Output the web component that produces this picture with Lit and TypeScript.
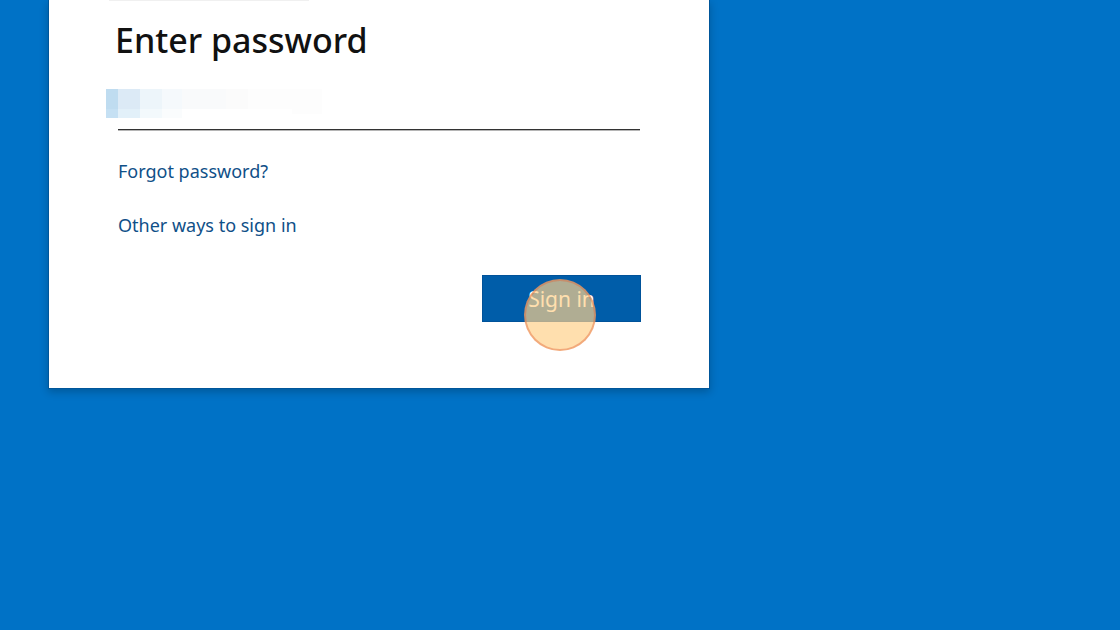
import { LitElement, html, css } from "lit";
import { customElement, state } from "lit/decorators.js";

@customElement("app-root")
export class AppRoot extends LitElement {
  static styles = css`
    :host {
      display: block;
      min-height: 100vh;
      box-sizing: border-box;
      padding: 0 48px;
      background: #0072c6;
      font-family: "Segoe UI", "Noto Sans", sans-serif;
      overflow: hidden;
    }
    *, *::before, *::after { box-sizing: border-box; }
    .card {
      position: relative;
      width: 100%;
      max-width: 662px;
      padding: 16px 69px 66px;
      background: #fff;
      border: 1px solid #00569a;
      border-top: 0;
      box-shadow: 0 3px 8px rgba(0, 0, 0, 0.22);
    }
    .top-trace {
      position: absolute;
      top: 0;
      left: 60px;
      width: 200px;
      height: 1px;
      background: #f0f0f0;
    }
    h1 {
      margin: 0 -3px;
      font-size: 34px;
      line-height: 48px;
      font-weight: 500;
      color: #111;
    }
    .field { position: relative; margin-top: 16px; }
    .field input {
      display: block;
      width: 100%;
      height: 50px;
      padding: 0 4px;
      border: 0;
      border-bottom: 1px solid #333;
      box-shadow: 0 1px 0 #b5b5b5;
      border-radius: 0;
      outline: 0;
      background: transparent;
      font: inherit;
      font-size: 20px;
    }
    .mosaic {
      position: absolute;
      top: 9px;
      left: -12px;
      display: block;
      pointer-events: none;
    }
    .links {
      display: flex;
      flex-direction: column;
      align-items: flex-start;
      gap: 26px;
      margin-top: 27px;
    }
    .links a {
      font-size: 18px;
      line-height: 28px;
      color: #0f5088;
      text-decoration: none;
    }
    .actions {
      display: flex;
      justify-content: flex-end;
      margin: 36px -1px 0 0;
    }
    .submit { position: relative; }
    button {
      display: block;
      width: 159px;
      height: 47px;
      padding: 0;
      border: 1px solid #00529a;
      background: #005da9;
      color: #fff;
      font: inherit;
      font-size: 21px;
      line-height: 28px;
    }
    .click {
      position: absolute;
      left: 42px;
      top: 4px;
      width: 72px;
      height: 72px;
      border: 2px solid rgba(226, 104, 60, 0.45);
      border-radius: 50%;
      background: rgba(255, 209, 138, 0.69);
      pointer-events: none;
    }
  `;

  @state() private password = "";

  private submit(e: Event) {
    e.preventDefault();
  }

  render() {
    return html`
      <form class="card" @submit=${this.submit}>
        <span class="top-trace"></span>
        <h1>Enter password</h1>
        <div class="field">
          <input
            type="password"
            aria-label="Enter password"
            .value=${this.password}
            @input=${(e: Event) => (this.password = (e.target as HTMLInputElement).value)}
          />
          <svg class="mosaic" width="216" height="29" viewBox="0 0 216 29" shape-rendering="crispEdges" aria-hidden="true">
            <rect width="12" height="20" fill="#bfdcf0" />
            <rect y="20" width="12" height="9" fill="#c5e0f3" />
            <rect x="12" width="22" height="20" fill="#dceaf6" />
            <rect x="12" y="20" width="22" height="9" fill="#e2f0f9" />
            <rect x="34" width="22" height="20" fill="#edf5fa" />
            <rect x="34" y="20" width="22" height="9" fill="#f3f9fc" />
            <rect x="56" width="20" height="20" fill="#f5f9fc" />
            <rect x="56" y="20" width="20" height="9" fill="#fafcfd" />
            <rect x="76" width="44" height="20" fill="#f9fafb" />
            <rect x="120" width="22" height="20" fill="#fbfbfb" />
            <rect x="142" width="74" height="20" fill="#fdfdfd" />
            <rect x="186" y="20" width="30" height="5" fill="#fdfdfd" />
          </svg>
        </div>
        <nav class="links">
          <a href="#forgot">Forgot password?</a>
          <a href="#other">Other ways to sign in</a>
        </nav>
        <div class="actions">
          <div class="submit">
            <button type="submit">Sign in</button>
            <span class="click"></span>
          </div>
        </div>
      </form>
    `;
  }
}
